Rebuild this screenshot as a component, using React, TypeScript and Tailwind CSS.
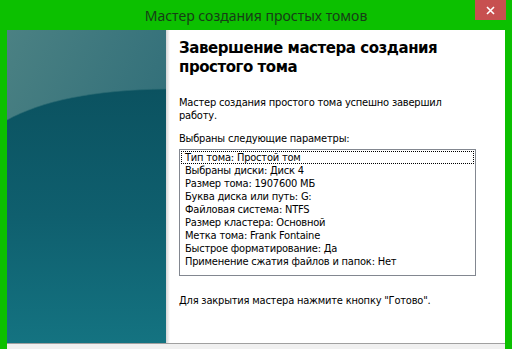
import React from "react";

const items = [
  "Тип тома: Простой том",
  "Выбраны диски: Диск 4",
  "Размер тома: 1907600 МБ",
  "Буква диска или путь: G:",
  "Файловая система: NTFS",
  "Размер кластера: Основной",
  "Метка тома: Frank Fontaine",
  "Быстрое форматирование: Да",
  "Применение сжатия файлов и папок: Нет",
];

function SidePicture() {
  return (
    <svg width="159" height="313" viewBox="0 0 159 313" className="block">
      <defs>
        <linearGradient id="topg" x1="0" y1="0" x2="1" y2="1">
          <stop offset="0" stopColor="#4b8183" />
          <stop offset="0.6" stopColor="#33707a" />
          <stop offset="1" stopColor="#296470" />
        </linearGradient>
        <linearGradient id="botg" x1="0" y1="0" x2="0" y2="1">
          <stop offset="0" stopColor="#0b5260" />
          <stop offset="0.5" stopColor="#0f5f6e" />
          <stop offset="1" stopColor="#147381" />
        </linearGradient>
      </defs>
      <rect x="0" y="0" width="159" height="313" fill="url(#topg)" />
      <path d="M0 90 C 35 71, 85 60, 159 59 L159 313 L0 313 Z" fill="url(#botg)" />
      <path d="M0 90 C 35 71, 85 60, 159 59" fill="none" stroke="#2b6a73" strokeWidth="1" opacity="0.6" />
    </svg>
  );
}

export default function App() {
  const body = { fontFamily: '"DejaVu Sans Condensed", "DejaVu Sans", sans-serif' };
  return (
    <div className="w-[515px] h-[349px] bg-white overflow-hidden">
      <div className="w-[512px] h-[349px] bg-[#0cc000] flex flex-col">
        <div className="relative h-[30px] flex items-center justify-center shrink-0">
          <span
            className="text-[14px] text-[#173d17] leading-none pt-[1px]"
            style={{ fontFamily: '"Noto Sans", "Liberation Sans", sans-serif' }}
          >
            Мастер создания простых томов
          </span>
          <div className="absolute top-0 right-[6px] w-[31px] h-[20px] bg-[#c75050] flex items-center justify-center">
            <svg width="9" height="9" viewBox="0 0 9 9">
              <path d="M1 1 L8 8 M8 1 L1 8" stroke="#ffffff" strokeWidth="1.6" />
            </svg>
          </div>
        </div>
        <div className="mx-[7px] flex-1 flex flex-col bg-[#f0f0f0]">
          <div className="h-[313px] flex bg-white shrink-0">
            <div className="w-[159px] shrink-0">
              <SidePicture />
            </div>
            <div className="w-[4px] shrink-0 bg-gradient-to-r from-[#d4d4d4] to-white" />
            <div className="flex-1 flex flex-col pl-[9px] pt-[9px] text-black">
              <div
                className="text-[15px] font-bold leading-[19px] tracking-[-0.45px]"
                style={{ fontFamily: '"DejaVu Sans", Verdana, sans-serif' }}
              >
                Завершение мастера создания
                <br />
                простого тома
              </div>
              <div className="text-[11px] leading-[13px] mt-[19px] tracking-[-0.2px]" style={body}>
                Мастер создания простого тома успешно завершил
                <br />
                работу.
              </div>
              <div className="text-[11px] leading-[13px] mt-[10px] tracking-[-0.2px]" style={body}>
                Выбраны следующие параметры:
              </div>
              <div
                className="mt-[4px] w-[297px] h-[127px] border border-[#828790] px-[1px] pt-[1px] text-[11px] leading-[13px] tracking-[-0.2px]"
                style={body}
              >
                {items.map((t, i) => (
                  <div key={t} className="relative h-[13px] pl-[4px] whitespace-nowrap">
                    {i === 0 && (
                      <div className="absolute inset-0 border border-dotted border-black pointer-events-none" />
                    )}
                    {t}
                  </div>
                ))}
              </div>
              <div className="text-[11px] leading-[13px] mt-[18px] tracking-[-0.2px]" style={body}>
                Для закрытия мастера нажмите кнопку "Готово".
              </div>
            </div>
          </div>
          <div className="h-[1px] bg-[#a0a0a0] shrink-0" />
        </div>
      </div>
    </div>
  );
}
